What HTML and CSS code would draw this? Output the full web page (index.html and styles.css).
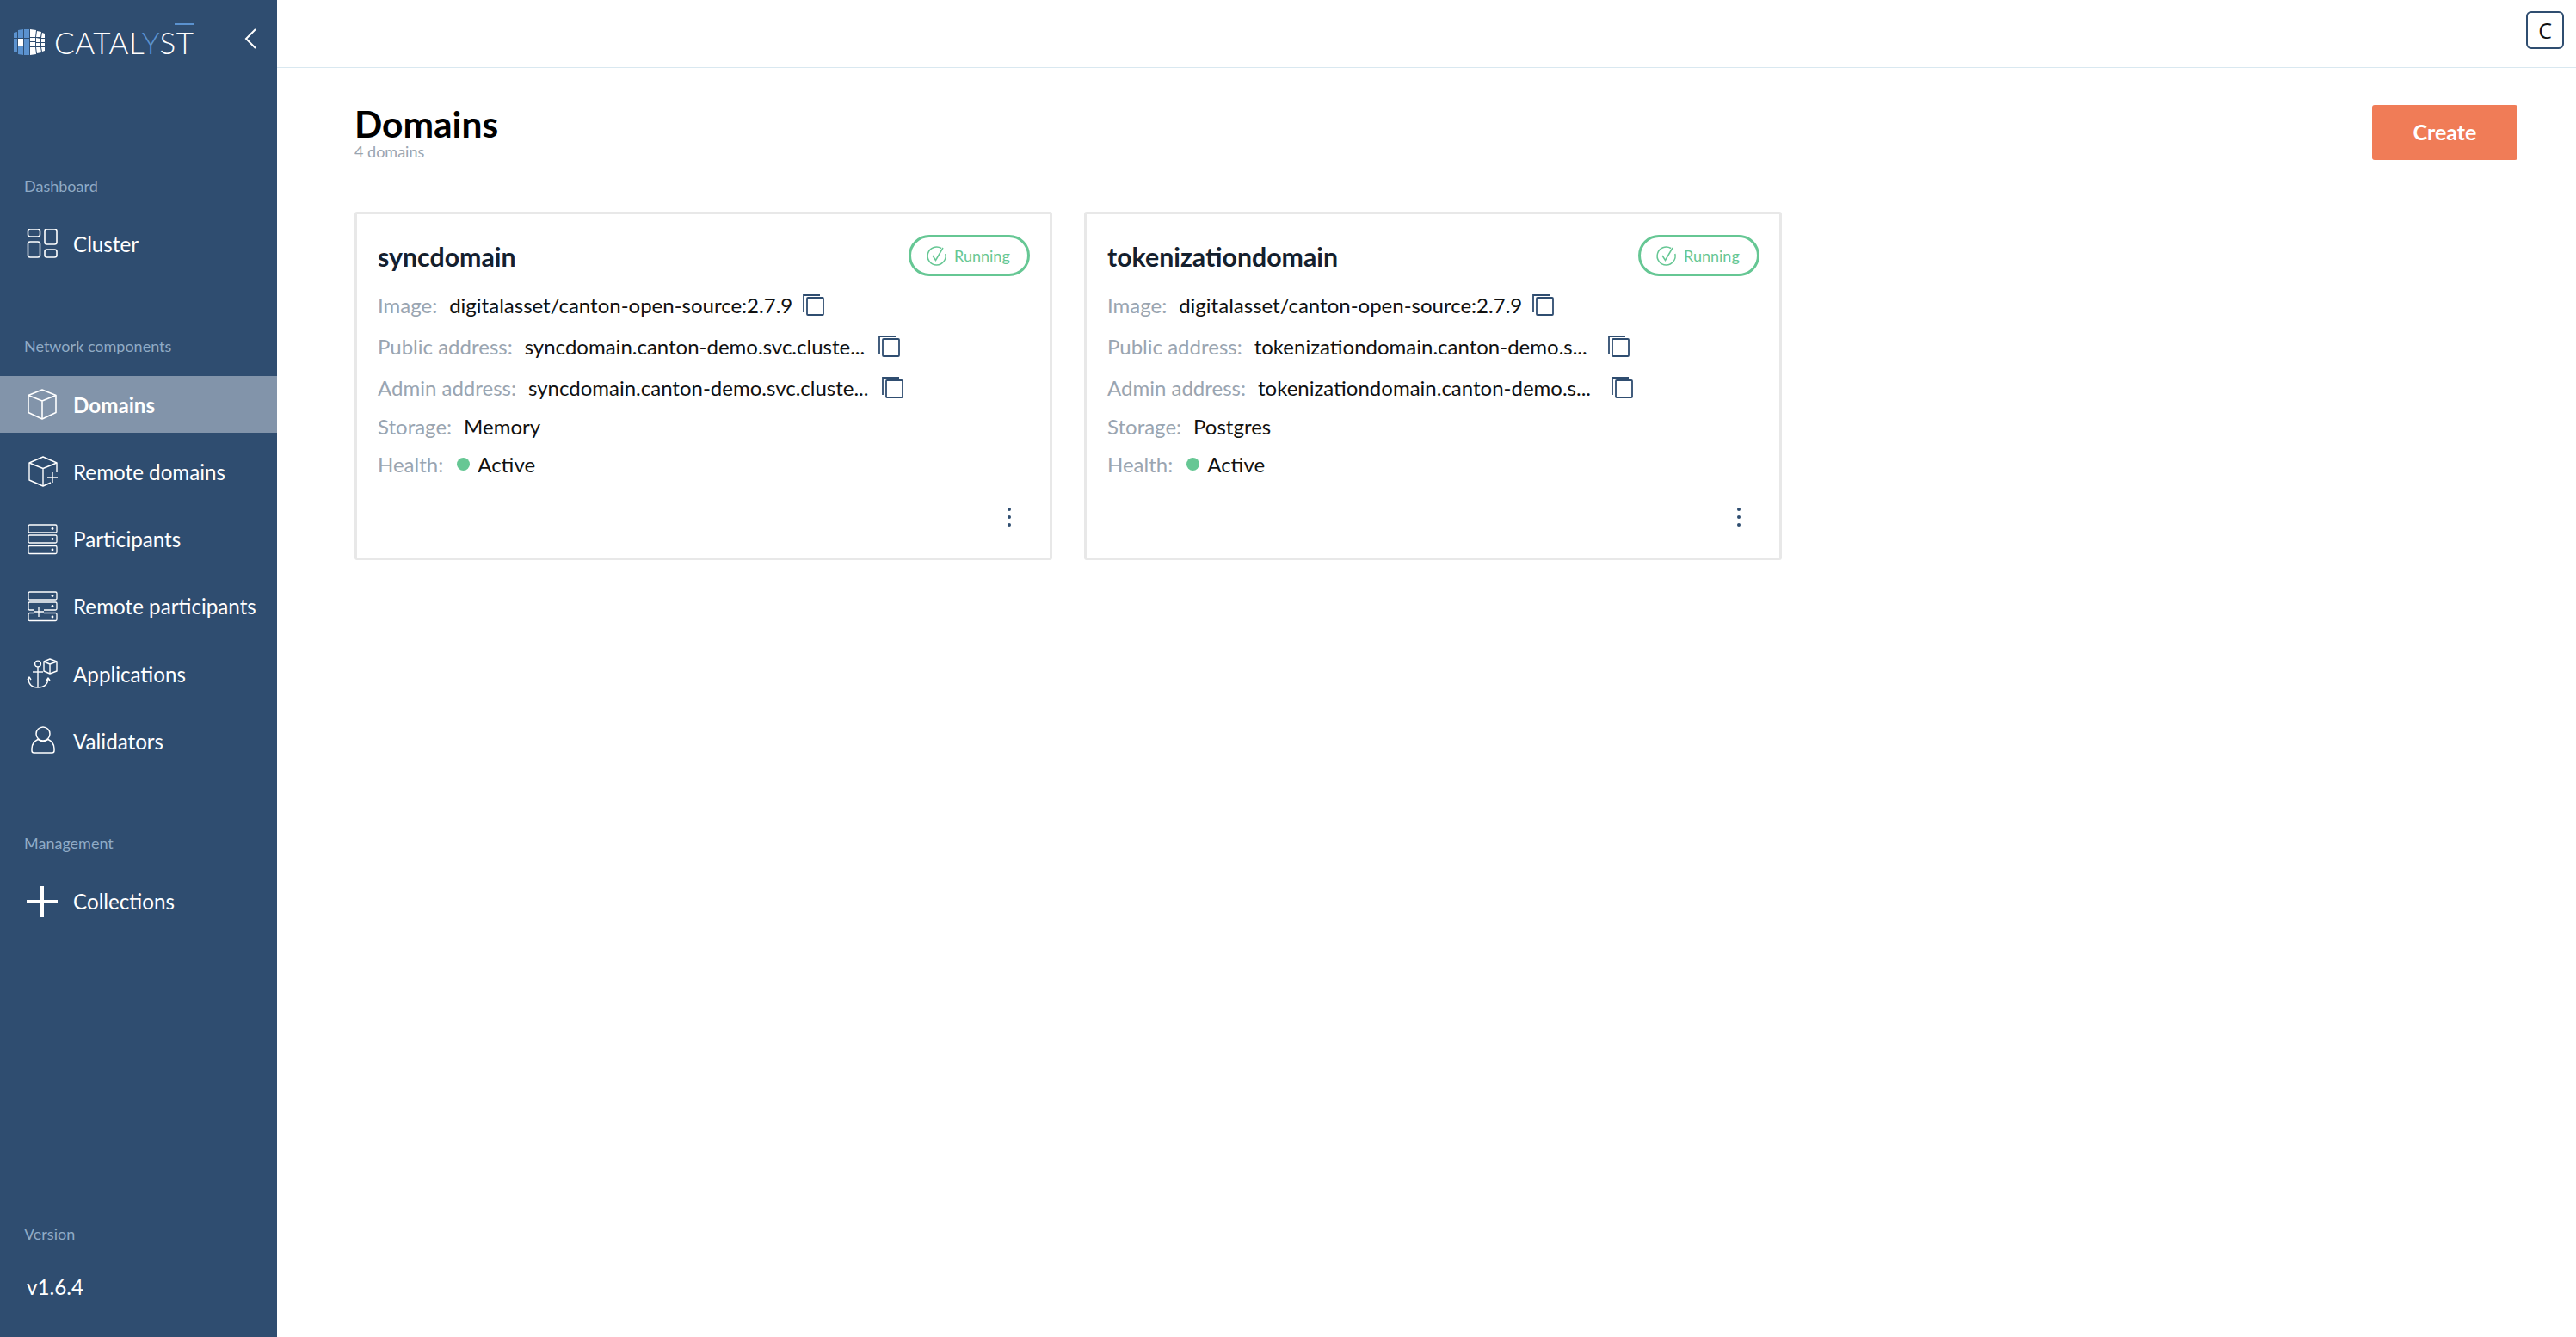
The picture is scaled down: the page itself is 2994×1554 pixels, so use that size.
FILE: index.html
```html
<!DOCTYPE html>
<html lang="en">

<head>
  <meta charset="UTF-8">
  <title>Catalyst - Domains</title>
  <link rel="stylesheet" href="styles.css">
</head>

<body>
  <aside class="sidebar">
    <div class="logo-row">
      <svg class="logo-mark" viewBox="0 0 36 30" width="36" height="30">
        <g fill="#5b92cf">
          <path d="M0 4 L4 3 L4 10 L0 10 Z" />
          <path d="M5 1 L11 0 L11 10 L5 10 Z" />
          <path d="M12 0 L18 0 L18 10 L12 10 Z" />
          <path d="M0 11 L4 11 L4 19 L0 19 Z" />
          <path d="M12 11 L18 11 L18 19 L12 19 Z" />
          <path d="M0 20 L4 20 L4 27 L0 26 Z" />
          <path d="M5 20 L11 20 L11 30 L5 29 Z" />
          <path d="M12 20 L18 20 L18 30 L12 30 Z" />
        </g>
        <g fill="#ffffff">
          <rect x="5" y="11" width="6" height="8" />
          <path d="M19 0 L26 1 L25 9 L19 9 Z" />
          <path d="M27 2 L32 3 L31 9 L26 9 Z" />
          <path d="M33 4 L36 5 L36 10 L32 10 Z" />
          <path d="M19 10 L25 10 L25 14 L19 14 Z" />
          <path d="M26 10 L31 11 L31 15 L26 15 Z" />
          <path d="M32 11 L36 11 L36 15 L32 15 Z" />
          <path d="M19 15 L25 15 L25 20 L19 20 Z" />
          <path d="M26 16 L31 16 L31 20 L26 20 Z" />
          <path d="M32 16 L36 16 L36 20 L32 20 Z" />
          <path d="M19 21 L25 21 L26 29 L19 30 Z" />
          <path d="M26 21 L31 21 L32 27 L27 28 Z" />
          <path d="M32 21 L36 21 L36 25 L33 26 Z" />
        </g>
      </svg>
      <span class="logo-text">CATAL<span class="logo-y">Y</span>S<span class="logo-t">T</span></span>
      <svg class="collapse" viewBox="0 0 14 24" width="14" height="24" fill="none" stroke="#ffffff" stroke-width="2">
        <path d="M13 1 L2 12 L13 23" />
      </svg>
    </div>

    <section class="nav-section nav-first">
      <div class="nav-label">Dashboard</div>
      <a class="nav-item">
        <svg class="nav-icon" viewBox="0 0 36 36" fill="none" stroke="#fff" stroke-width="1.6">
          <rect x="1.5" y="0" width="14" height="9" rx="2.5" />
          <rect x="21" y="0" width="14" height="18" rx="2.5" />
          <rect x="1.5" y="15" width="14" height="18" rx="2.5" />
          <rect x="21" y="24" width="14" height="9" rx="2.5" />
        </svg>
        Cluster
      </a>
    </section>

    <section class="nav-section">
      <div class="nav-label">Network components</div>
      <a class="nav-item active">
        <svg class="nav-icon" viewBox="0 0 36 36" fill="none" stroke="#fff" stroke-width="1.6" stroke-linejoin="round">
          <path d="M18 1 L34 7.5 L34 27.5 L18 35 L2 27.5 L2 7.5 Z" />
          <path d="M2 7.5 L18 14 L34 7.5 M18 14 L18 35" />
        </svg>
        Domains
      </a>
      <a class="nav-item">
        <svg class="nav-icon" viewBox="0 0 36 36" fill="none" stroke="#fff" stroke-width="1.4" stroke-linejoin="round">
          <path d="M28 31 L19 35 L3 28 L3 8 L19 1 L35 8 L35 19" />
          <path d="M3 8 L19 14.5 L35 8 M19 14.5 L19 35" />
          <path d="M24 25 L36 25 M30 19 L30 31" />
        </svg>
        Remote domains
      </a>
      <a class="nav-item">
        <svg class="nav-icon" viewBox="0 0 36 36" fill="none" stroke="#fff" stroke-width="1.3">
          <rect x="2" y="1" width="33" height="9" rx="1.5" />
          <rect x="2" y="13" width="33" height="9" rx="1.5" />
          <rect x="2" y="25.5" width="33" height="9" rx="1.5" />
          <g fill="#fff" stroke="none">
            <circle cx="30" cy="5.5" r="1.4" />
            <circle cx="30" cy="17.5" r="1.4" />
            <circle cx="30" cy="30" r="1.4" />
          </g>
        </svg>
        Participants
      </a>
      <a class="nav-item">
        <svg class="nav-icon" viewBox="0 0 36 36" fill="none" stroke="#fff" stroke-width="1.3">
          <rect x="2" y="1" width="33" height="9" rx="1.5" />
          <path d="M8 22 L3.5 22 Q2 22 2 20.5 L2 14.5 Q2 13 3.5 13 L33.5 13 Q35 13 35 14.5 L35 20.5 Q35 22 33.5 22 L20 22" />
          <path d="M20 25.5 L33.5 25.5 Q35 25.5 35 27 L35 33 Q35 34.5 33.5 34.5 L3.5 34.5 Q2 34.5 2 33 L2 27 Q2 25.5 3.5 25.5 L8 25.5" />
          <path d="M8 24 L20 24 M14 18 L14 30" />
          <g fill="#fff" stroke="none">
            <circle cx="30" cy="5.5" r="1.4" />
            <circle cx="30" cy="17.5" r="1.4" />
            <circle cx="30" cy="30" r="1.4" />
          </g>
        </svg>
        Remote participants
      </a>
      <a class="nav-item">
        <svg class="nav-icon" viewBox="0 0 36 36" fill="none" stroke="#fff" stroke-width="1.4" stroke-linejoin="round">
          <circle cx="13" cy="6.5" r="3.4" />
          <path d="M13 10 L13 34" />
          <path d="M7 16 L19 16" />
          <path d="M2 23 Q2 34 13 34 Q24 34 25 24" />
          <path d="M1 25 L3 22 L5 25 M23 26 L25 23 L27 26" />
          <path d="M27 1 L35 4 L35 15 L27 18 L20 15 L20 4 Z" />
          <path d="M20 4 L27 7 L35 4 M27 7 L27 18" />
        </svg>
        Applications
      </a>
      <a class="nav-item">
        <svg class="nav-icon" viewBox="0 0 36 36" fill="none" stroke="#fff" stroke-width="1.5">
          <circle cx="19" cy="9" r="8" />
          <path d="M13 15.5 Q6 19 6 26 L6 28.5 Q6 31 8.5 31 L29.5 31 Q32 31 32 28.5 L32 26 Q32 19 25 15.5 Q19 20 13 15.5 Z" />
        </svg>
        Validators
      </a>
    </section>

    <section class="nav-section">
      <div class="nav-label">Management</div>
      <a class="nav-item">
        <svg class="nav-icon" viewBox="0 0 36 36" fill="none" stroke="#fff" stroke-width="4">
          <path d="M18 0 L18 36 M0 18 L36 18" />
        </svg>
        Collections
      </a>
    </section>

    <div class="version">
      <div class="nav-label">Version</div>
      <div class="version-number">v1.6.4</div>
    </div>
  </aside>

  <div class="content">
    <header class="topbar">
      <button class="avatar">C</button>
    </header>

    <main class="page">
      <div class="page-head">
        <div>
          <h1>Domains</h1>
          <p class="count">4 domains</p>
        </div>
        <button class="create">Create</button>
      </div>

      <div class="cards">
        <article class="card">
          <div class="card-head">
            <h2>syncdomain</h2>
            <span class="badge">
              <svg viewBox="0 0 25 25" width="25" height="25" fill="none" stroke="#66c794" stroke-width="1.5">
                <path d="M18 3.5 A10.5 10.5 0 1 0 22.8 10" />
                <path d="M8 12 L11.5 17.5 L20 3" />
              </svg>
              Running
            </span>
          </div>
          <div class="row tall">
            <span class="label">Image:</span>
            <span class="value">digitalasset/canton-open-source:2.7.9</span>
            <svg class="copy" viewBox="0 0 25 25" fill="none" stroke="#2f4d70" stroke-width="1.8">
              <path d="M1 21 L1 1 L20 1" />
              <rect x="5" y="4" width="19" height="20" rx="1" />
            </svg>
          </div>
          <div class="row tall">
            <span class="label">Public address:</span>
            <span class="value clip">syncdomain.canton-demo.svc.cluste...</span>
            <svg class="copy" viewBox="0 0 25 25" fill="none" stroke="#2f4d70" stroke-width="1.8">
              <path d="M1 21 L1 1 L20 1" />
              <rect x="5" y="4" width="19" height="20" rx="1" />
            </svg>
          </div>
          <div class="row tall">
            <span class="label">Admin address:</span>
            <span class="value clip">syncdomain.canton-demo.svc.cluste...</span>
            <svg class="copy" viewBox="0 0 25 25" fill="none" stroke="#2f4d70" stroke-width="1.8">
              <path d="M1 21 L1 1 L20 1" />
              <rect x="5" y="4" width="19" height="20" rx="1" />
            </svg>
          </div>
          <div class="row">
            <span class="label">Storage:</span>
            <span class="value">Memory</span>
          </div>
          <div class="row">
            <span class="label">Health:</span>
            <span class="value health"><i class="dot"></i>Active</span>
          </div>
          <div class="card-menu"><span class="kebab"><i></i><i></i><i></i></span></div>
        </article>

        <article class="card">
          <div class="card-head">
            <h2>tokenizationdomain</h2>
            <span class="badge">
              <svg viewBox="0 0 25 25" width="25" height="25" fill="none" stroke="#66c794" stroke-width="1.5">
                <path d="M18 3.5 A10.5 10.5 0 1 0 22.8 10" />
                <path d="M8 12 L11.5 17.5 L20 3" />
              </svg>
              Running
            </span>
          </div>
          <div class="row tall">
            <span class="label">Image:</span>
            <span class="value">digitalasset/canton-open-source:2.7.9</span>
            <svg class="copy" viewBox="0 0 25 25" fill="none" stroke="#2f4d70" stroke-width="1.8">
              <path d="M1 21 L1 1 L20 1" />
              <rect x="5" y="4" width="19" height="20" rx="1" />
            </svg>
          </div>
          <div class="row tall">
            <span class="label">Public address:</span>
            <span class="value clip">tokenizationdomain.canton-demo.s...</span>
            <svg class="copy" viewBox="0 0 25 25" fill="none" stroke="#2f4d70" stroke-width="1.8">
              <path d="M1 21 L1 1 L20 1" />
              <rect x="5" y="4" width="19" height="20" rx="1" />
            </svg>
          </div>
          <div class="row tall">
            <span class="label">Admin address:</span>
            <span class="value clip">tokenizationdomain.canton-demo.s...</span>
            <svg class="copy" viewBox="0 0 25 25" fill="none" stroke="#2f4d70" stroke-width="1.8">
              <path d="M1 21 L1 1 L20 1" />
              <rect x="5" y="4" width="19" height="20" rx="1" />
            </svg>
          </div>
          <div class="row">
            <span class="label">Storage:</span>
            <span class="value">Postgres</span>
          </div>
          <div class="row">
            <span class="label">Health:</span>
            <span class="value health"><i class="dot"></i>Active</span>
          </div>
          <div class="card-menu"><span class="kebab"><i></i><i></i><i></i></span></div>
        </article>
      </div>
    </main>
  </div>
</body>

</html>
```

FILE: styles.css
```css
* {
  box-sizing: border-box;
}

body {
  font-family: Lato, "Open Sans", sans-serif;
  margin: 0;
  padding: 0;
  display: flex;
  height: 1554px;
  background-color: #fff;
  overflow: hidden;
}

.sidebar {
  width: 322px;
  flex-shrink: 0;
  height: 100%;
  display: flex;
  flex-direction: column;
  background-color: #2f4d70;
  color: white;
}

.logo-row {
  display: flex;
  align-items: center;
  height: 78px;
  padding: 20px 24px 0 16px;
}

.logo-mark {
  flex-shrink: 0;
}

.logo-text {
  margin-left: 11px;
  font-size: 35px;
  font-weight: 300;
  letter-spacing: 0.5px;
  line-height: 1;
}

.logo-y {
  color: #5b92cf;
}

.logo-t {
  position: relative;
}

.logo-t::before {
  content: "";
  position: absolute;
  top: -1px;
  left: -2px;
  right: 0;
  height: 2px;
  background-color: #5b92cf;
}

.collapse {
  margin-left: auto;
  margin-top: -8px;
}

.nav-first {
  margin-top: 126px;
}

.nav-section {
  display: flex;
  flex-direction: column;
  gap: 12.3px;
  margin-bottom: 73.5px;
}

.nav-label {
  height: 24px;
  line-height: 24px;
  padding-left: 28px;
  font-size: 18px;
  color: #8fabc6;
  margin-bottom: 10.5px;
}

.nav-item {
  display: flex;
  align-items: center;
  gap: 18px;
  height: 66px;
  padding-left: 31px;
  font-size: 24.2px;
  color: white;
}

.nav-item.active {
  background-color: #8294aa;
  font-weight: 700;
}

.nav-icon {
  width: 36px;
  height: 36px;
  flex-shrink: 0;
}

.version {
  margin-top: auto;
  padding-bottom: 43px;
}

.version .nav-label {
  margin-bottom: 35px;
}

.version-number {
  padding-left: 31px;
  font-size: 24.2px;
  line-height: 30px;
}

.content {
  flex: 1;
  display: flex;
  flex-direction: column;
}

.topbar {
  height: 79px;
  display: flex;
  justify-content: flex-end;
  padding: 13px 14px 0 0;
  border-bottom: 1px solid #d9e8f0;
}

.avatar {
  width: 44px;
  height: 44px;
  padding: 0;
  background-color: #fff;
  border: 2px solid #2f4d70;
  border-radius: 6px;
  font-family: "Open Sans", sans-serif;
  font-size: 25px;
  color: #111;
}

.page {
  padding: 43px 68px 0 90px;
}

.page-head {
  display: flex;
  justify-content: space-between;
  height: 124px;
}

h1 {
  margin: -1px 0 -1px;
  font-size: 42.5px;
  line-height: 46px;
  font-weight: 700;
  color: #000;
}

.count {
  margin: 0;
  font-size: 18px;
  line-height: 20px;
  color: #9aa5b1;
}

.create {
  width: 169px;
  height: 64px;
  padding: 0 0 3px;
  background-color: #f07c57;
  color: white;
  border: none;
  border-radius: 3px;
  font-family: Lato, sans-serif;
  font-size: 25px;
  font-weight: 700;
}

.cards {
  display: flex;
  gap: 37px;
}

.card {
  width: 811px;
  height: 405px;
  padding: 24px 23px 0 24px;
  border: 3px solid #e8e8e8;
  border-radius: 3px;
}

.card-head {
  display: flex;
  justify-content: space-between;
  align-items: center;
  height: 48px;
  margin-bottom: 9px;
}

h2 {
  margin: 0;
  padding-top: 1px;
  font-size: 30.3px;
  font-weight: 700;
  color: #14202e;
}

.badge {
  display: flex;
  align-items: center;
  gap: 8px;
  width: 141px;
  height: 48px;
  padding-left: 17px;
  border: 3px solid #66c794;
  border-radius: 24px;
  font-size: 18px;
  color: #66c794;
}

.row {
  display: flex;
  align-items: center;
  gap: 14px;
  height: 44px;
  font-size: 24px;
}

.row.tall {
  height: 48px;
}

.row.tall + .row:not(.tall) {
  margin-top: -1px;
}

.label {
  color: #9aa5b1;
}

.value {
  color: #111;
}

.clip {
  width: 399px;
  flex-shrink: 0;
  white-space: nowrap;
}

.copy {
  width: 25px;
  height: 25px;
  flex-shrink: 0;
  margin-left: -2px;
}

.health {
  display: flex;
  align-items: center;
  gap: 9px;
}

.dot {
  width: 15px;
  height: 15px;
  border-radius: 50%;
  background-color: #66c794;
  margin-left: 2px;
}

.card-menu {
  display: flex;
  justify-content: flex-end;
  padding: 29px 22px 0 0;
}

.kebab {
  display: flex;
  flex-direction: column;
  gap: 5px;
}

.kebab i {
  width: 4px;
  height: 4px;
  border-radius: 50%;
  background-color: #2f4d70;
}
```
